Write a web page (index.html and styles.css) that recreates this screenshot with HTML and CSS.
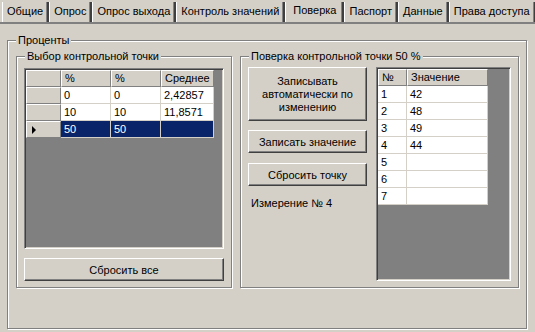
FILE: index.html
```html
<!DOCTYPE html>
<html lang="ru">
<head>
  <meta charset="UTF-8">
  <title>Поверка</title>
  <link rel="stylesheet" href="styles.css">
</head>
<body>
  <div class="tabs">
    <div class="tab">Общие</div>
    <div class="tab">Опрос</div>
    <div class="tab">Опрос выхода</div>
    <div class="tab">Контроль значений</div>
    <div class="tab active">Поверка</div>
    <div class="tab">Паспорт</div>
    <div class="tab">Данные</div>
    <div class="tab">Права доступа</div>
  </div>

  <div class="page">
    <fieldset class="group percents">
      <legend>Проценты</legend>
      <div class="groups-row">

        <!-- Выбор точки -->
        <fieldset class="group points">
          <legend>Выбор контрольной точки</legend>
          <div class="grid grid-points">
            <table>
              <colgroup>
                <col style="width:35px"><col style="width:50px"><col style="width:50px"><col style="width:49px">
              </colgroup>
              <tr><th></th><th>%</th><th>%</th><th>Среднее</th></tr>
              <tr><td class="ind"></td><td>0</td><td>0</td><td>2,42857</td></tr>
              <tr><td class="ind"></td><td>10</td><td>10</td><td>11,8571</td></tr>
              <tr class="selected"><td class="ind"><span class="arrow"></span></td><td>50</td><td>50</td><td></td></tr>
            </table>
          </div>
          <button class="btn btn-wide">Сбросить все</button>
        </fieldset>

        <!-- Поверка -->
        <fieldset class="group check">
          <legend>Поверка контрольной точки 50 %</legend>
          <div class="check-row">
            <div class="actions">
              <button class="btn btn-auto">Записывать автоматически по изменению</button>
              <button class="btn">Записать значение</button>
              <button class="btn btn-reset">Сбросить точку</button>
              <div class="measure">Измерение № 4</div>
            </div>
            <div class="grid grid-values">
              <table>
                <colgroup>
                  <col style="width:29px"><col style="width:81px">
                </colgroup>
                <tr><th>№</th><th>Значение</th></tr>
                <tr><td>1</td><td>42</td></tr>
                <tr><td>2</td><td>48</td></tr>
                <tr><td>3</td><td>49</td></tr>
                <tr><td>4</td><td>44</td></tr>
                <tr><td>5</td><td></td></tr>
                <tr><td>6</td><td></td></tr>
                <tr><td>7</td><td></td></tr>
              </table>
            </div>
          </div>
        </fieldset>

      </div>
    </fieldset>
  </div>
</body>
</html>
```

FILE: styles.css
```css
/* Classic window look */
body {
  margin: 0;
  width: 535px;
  height: 332px;
  overflow: hidden;
  background: #d4d0c8;
  font: 11px "Liberation Sans", "DejaVu Sans", sans-serif;
  color: #000;
}

/* Tabs */
.tabs {
  display: flex;
  height: 20px;
  padding: 2px 0 0 2px;
  border-bottom: 2px solid #808080;
}

.tab {
  padding: 0 4px;
  line-height: 19px;
  border-left: 1px solid #fff;
  border-right: 2px solid #404040;
  box-shadow: inset -1px 0 #808080;
  white-space: nowrap;
}

.tab.active {
  padding: 0 6px 0 7px;
  line-height: 17px;
}

/* Group boxes */
.page {
  padding: 10px 0 0 7px;
}

.group {
  margin: 0;
  border: 1px solid #808080;
  box-shadow: inset 1px 1px #fff, 1px 1px #fff;
  min-width: 0;
}

.group legend {
  padding: 0 2px;
  line-height: 13px;
  background: #d4d0c8;
}

.percents {
  width: 520px;
  box-sizing: border-box;
  padding: 3px 7px 40px 8px;
}

.groups-row {
  display: flex;
  gap: 8px;
}

.points {
  width: 216px;
  box-sizing: border-box;
  padding: 5px 7px 6px 7px;
}

.check {
  width: 279px;
  box-sizing: border-box;
  padding: 4px 7px 6px 7px;
}

.points legend,
.check legend {
  margin-left: 1px;
}

/* Grids */
.grid {
  box-sizing: border-box;
  padding: 1px;
  background: #808080;
  border: 1px solid;
  border-color: #808080 #fff #fff #808080;
  box-shadow: inset 1px 1px #404040, inset -1px -1px #d4d0c8;
}

.grid-points {
  width: 200px;
  height: 181px;
}

.grid-values {
  width: 135px;
  height: 214px;
}

.grid table {
  border-spacing: 0;
  table-layout: fixed;
}

.grid th,
.grid td {
  box-sizing: border-box;
  height: 17px;
  padding: 0 3px;
  text-align: left;
  font-weight: normal;
  line-height: 15px;
  white-space: nowrap;
  overflow: hidden;
}

.grid th {
  background: #d4d0c8;
  border-top: 1px solid #fff;
  border-left: 1px solid #fff;
  border-right: 1px solid #808080;
  border-bottom: 1px solid #808080;
}

.grid td {
  background: #fff;
  border-right: 1px solid #d4d0c8;
  border-bottom: 1px solid #d4d0c8;
}

.grid td.ind {
  background: #d4d0c8;
  border-top: 1px solid #fff;
  border-left: 1px solid #fff;
  border-right: 1px solid #808080;
  border-bottom: 1px solid #808080;
  padding-left: 5px;
}

.grid tr.selected td {
  background: #0a246a;
  color: #fff;
}

.grid tr.selected td.ind {
  background: #d4d0c8;
}

.arrow {
  display: inline-block;
  vertical-align: middle;
  border-left: 4px solid #000;
  border-top: 4px solid transparent;
  border-bottom: 4px solid transparent;
}

/* Buttons */
.btn {
  display: block;
  box-sizing: border-box;
  width: 119px;
  height: 23px;
  padding: 0 6px;
  font: inherit;
  color: #000;
  background: #d4d0c8;
  border: 1px solid;
  border-color: #fff #404040 #404040 #fff;
  box-shadow: inset -1px -1px #808080;
}

.btn-wide {
  width: 200px;
  margin-top: 9px;
}

.btn-auto {
  height: 54px;
  line-height: 13px;
}

.check-row {
  display: flex;
  gap: 9px;
}

.actions {
  display: flex;
  flex-direction: column;
  gap: 9px;
}

.btn-reset {
  margin-top: 1px;
}

.measure {
  margin: 2px 0 0 3px;
  line-height: 13px;
}
```
